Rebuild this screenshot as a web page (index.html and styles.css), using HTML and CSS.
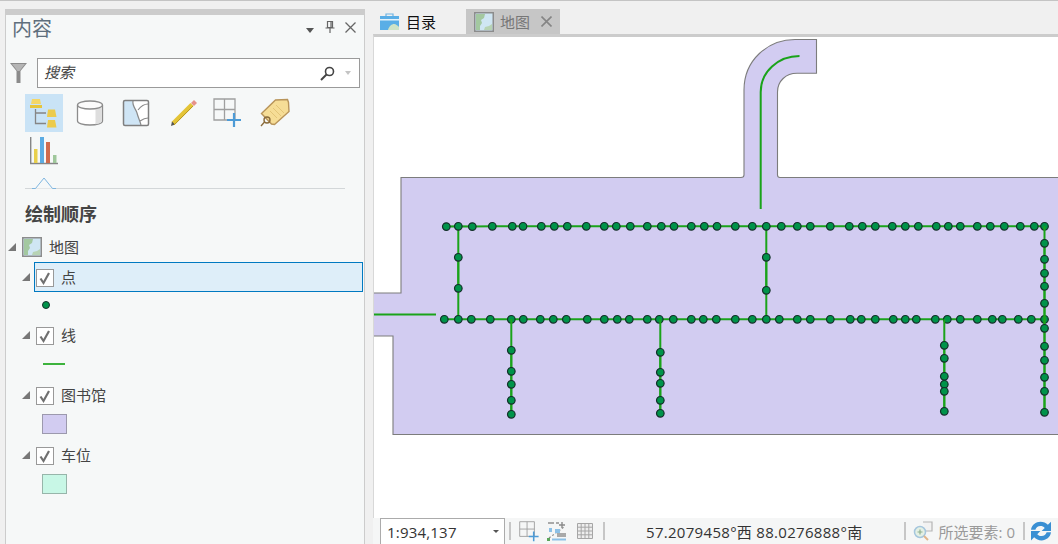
FILE: index.html
```html
<!DOCTYPE html>
<html lang="zh">
<head>
  <meta charset="UTF-8" />
  <title>内容 - 地图</title>
  <link rel="stylesheet" href="styles.css">
</head>
<body>
  <svg class="defs" width="0" height="0">
    <defs>
      <symbol id="map-thumb" viewBox="0 0 20 20">
        <rect x="0.75" y="0.75" width="18.5" height="18.5" fill="#cfe6f3" stroke="#8c8c8c" stroke-width="1.5"/>
        <path d="M2 2h9l-1 4-3 2 1 3-2 3v4H2z" fill="#a3c8a0"/>
        <path d="M18 12v6h-8l1-3 4-1z" fill="#b7d3b4"/>
      </symbol>
      <symbol id="check" viewBox="0 0 16 16">
        <path d="M3.500 8.500l3 4.500 5.500-10" fill="none" stroke="#707070" stroke-width="2.200"/>
      </symbol>
      <symbol id="grid-add" viewBox="0 0 30 30">
        <path d="M1 1h21v21H1zM11.500 1v21M1 11.500h21" fill="none" stroke="#9f9f9f" stroke-width="1.300"/>
        <path d="M21 15v14M14 22h14" fill="none" stroke="#4d9bd6" stroke-width="2.200"/>
      </symbol>
    </defs>
  </svg>

  <aside class="panel">
    <header class="panel-head">
      <h1 class="panel-title">内容</h1>
      <span class="panel-arrow"></span>
      <svg class="panel-pin" width="10" height="12" viewBox="0 0 10 12">
        <path d="M2.500 .5h5v6h-5zM.5 7h9M5 7v5M6 1v5" fill="none" stroke="#666" stroke-width="1.200"/>
      </svg>
      <svg class="panel-close" width="11" height="11" viewBox="0 0 11 11">
        <path d="M.5 .5l10 10M10.500 .5l-10 10" stroke="#666" stroke-width="1.300"/>
      </svg>
    </header>

    <div class="search-row">
      <svg width="17" height="20" viewBox="0 0 17 20">
        <path d="M0 0h17L10.500 8v12h-4V8z" fill="#8b8b8b"/>
        <path d="M2 1h13L9.500 8h-2z" fill="#b5b5b5"/>
      </svg>
      <div class="search-box">
        <span class="search-text">搜索</span>
        <svg class="search-icon" width="15" height="15" viewBox="0 0 15 15">
          <circle cx="9.500" cy="5.500" r="4" fill="none" stroke="#444" stroke-width="1.600"/>
          <path d="M6.500 8.500L1 14" stroke="#444" stroke-width="2"/>
        </svg>
        <span class="search-arrow"></span>
      </div>
    </div>

    <div class="toolbar">
      <button class="tool tool-active">
        <svg width="38" height="38" viewBox="0 0 38 38">
          <path d="M10.500 15v14.500H21M10.500 19H21" fill="none" stroke="#858585" stroke-width="1.300"/>
          <path d="M7 5h8l1 5H6z" fill="#f4d768"/><path d="M5 11h12v3H5z" fill="#e6c53c"/>
          <path d="M23 15.500h7l1.500 7.500H22z" fill="#eccb4c"/>
          <path d="M23 26h7l1.500 7.500H22z" fill="#eccb4c"/>
        </svg>
      </button>
      <button class="tool">
        <svg width="38" height="38" viewBox="0 0 38 38">
          <path d="M6.500 11v16c0 2.200 5.500 4 12.500 4s12.500-1.800 12.500-4V11" fill="#fff" stroke="#8c8c8c" stroke-width="1.300"/>
          <path d="M24.500 14v16.300c4-.5 6.400-1.800 6.400-3.300V14z" fill="#dedede"/>
          <ellipse cx="19" cy="11" rx="12.500" ry="4" fill="#fbfbfb" stroke="#8c8c8c" stroke-width="1.300"/>
        </svg>
      </button>
      <button class="tool">
        <svg width="38" height="38" viewBox="0 0 38 38">
          <path d="M7 7h24v24H7z" fill="#fff"/>
          <path d="M7 7h9c-1 5 3 8 4 12 1 4 3 8 4 12H7z" fill="#cfe5f5"/>
          <path d="M16 7c-1 5 3 8 4 12 1 4 3 8 4 12M21 16c3-4 6-6 10-6M23 27c3-2 5-3 8-3" fill="none" stroke="#8a8a8a" stroke-width="1.200"/>
          <rect x="6.500" y="6.500" width="25" height="25" rx="1.500" fill="none" stroke="#7f7f7f" stroke-width="1.500"/>
        </svg>
      </button>
      <button class="tool">
        <svg width="38" height="38" viewBox="0 0 38 38">
          <path d="M10 29.500L29 10.500" stroke="#e4c437" stroke-width="4.500"/>
          <path d="M28 9l3-3 3 3-3 3z" fill="#e6928a"/>
          <path d="M8 32l1-4.500 3 3z" fill="#555"/>
          <path d="M11 31L30 12" stroke="#b99a22" stroke-width="1"/>
        </svg>
      </button>
      <button class="tool">
        <svg class="tool-wide" width="30" height="30" viewBox="0 0 30 30"><use href="#grid-add"/></svg>
      </button>
      <button class="tool">
        <svg width="38" height="38" viewBox="0 0 38 38">
          <path d="M7 20L21 6.500 33 6l1 3 .5 9L20 31l-3-.5z" transform="translate(-.5 -.5)" fill="#f6dd96" stroke="#b8945a" stroke-width="1.400"/>
          <path d="M18 14l8 8M21 11l8 8M15 17l7 7" stroke="#e3c578" stroke-width="1"/>
          <circle cx="12" cy="26" r="3" fill="none" stroke="#8a6b3a" stroke-width="1.400"/>
          <path d="M9.500 28L6 32" stroke="#8a6b3a" stroke-width="1.400"/>
        </svg>
      </button>
      <button class="tool">
        <svg width="38" height="38" viewBox="0 0 38 38">
          <path d="M5.700 5v26.500H33" fill="none" stroke="#868686" stroke-width="1.400"/>
          <rect x="9" y="17" width="3.500" height="14" fill="#e8cf4c"/>
          <rect x="15" y="5" width="4" height="26" fill="#5cace3"/>
          <rect x="21" y="10" width="4" height="21" fill="#cf6b4d"/>
          <rect x="28" y="23" width="3.500" height="8" fill="#9fc79b"/>
        </svg>
      </button>
    </div>

    <div class="tab-line">
      <svg class="tab-notch" width="24" height="12" viewBox="0 0 24 12">
        <path d="M0 11.500h3.500L12 1l8.500 10.500H24" fill="#f6f8f8" stroke="#7eb6e0" stroke-width="1"/>
      </svg>
    </div>

    <h2 class="section-title">绘制顺序</h2>

    <div class="map-row">
      <span class="twisty"></span>
      <svg width="20" height="20"><use href="#map-thumb"/></svg>
      <span class="label">地图</span>
    </div>

    <div class="layer layer-first">
      <div class="layer-row">
        <span class="twisty"></span>
        <div class="layer-item layer-selected">
          <span class="checkbox"><svg width="16" height="16"><use href="#check"/></svg></span>
          <span class="label">点</span>
        </div>
      </div>
      <div class="legend"><span class="legend-dot"></span></div>
    </div>

    <div class="layer">
      <div class="layer-row">
        <span class="twisty"></span>
        <div class="layer-item">
          <span class="checkbox"><svg width="16" height="16"><use href="#check"/></svg></span>
          <span class="label">线</span>
        </div>
      </div>
      <div class="legend"><span class="legend-line"></span></div>
    </div>

    <div class="layer">
      <div class="layer-row">
        <span class="twisty"></span>
        <div class="layer-item">
          <span class="checkbox"><svg width="16" height="16"><use href="#check"/></svg></span>
          <span class="label">图书馆</span>
        </div>
      </div>
      <div class="legend"><span class="legend-swatch swatch-library"></span></div>
    </div>

    <div class="layer">
      <div class="layer-row">
        <span class="twisty"></span>
        <div class="layer-item">
          <span class="checkbox"><svg width="16" height="16"><use href="#check"/></svg></span>
          <span class="label">车位</span>
        </div>
      </div>
      <div class="legend"><span class="legend-swatch swatch-parking"></span></div>
    </div>
  </aside>

  <main class="main">
    <nav class="tabs">
      <div class="tab tab-catalog">
        <svg width="19" height="17" viewBox="0 0 19 17">
          <path d="M6 3V1h7v2" fill="none" stroke="#6db3e3" stroke-width="1.200"/>
          <rect y="3" width="19" height="14" fill="#5aaee6"/>
          <rect y="6" width="19" height="1.500" fill="#e6f3fb"/>
          <path d="M8 17c1-4 4-6 6-6s4 2 5 3v3z" fill="#cfe3c6"/>
        </svg>
        <span>目录</span>
      </div>
      <div class="tab tab-map">
        <svg width="20" height="20"><use href="#map-thumb"/></svg>
        <span>地图</span>
        <svg class="tab-close" width="11" height="11" viewBox="0 0 11 11">
          <path d="M.5 .5l10 10M10.500 .5l-10 10" stroke="#858585" stroke-width="1.600"/>
        </svg>
      </div>
    </nav>

    <section class="map">
      <svg class="map-canvas" width="684" height="481" viewBox="374 37 684 481">
        <defs>
          <marker id="pt" markerUnits="userSpaceOnUse" markerWidth="11" markerHeight="11" refX="5.500" refY="5.500">
            <circle cx="5.500" cy="5.500" r="3.800" fill="#00934a" stroke="#14302a" stroke-width="1.200"/>
          </marker>
        </defs>

        <path class="parking" d="M370 293H401V177.500H741Q744 177.500 744 175V90C744 60 768 39.500 795 39.500H816.500V73.300H797C786 73.300 777.500 81 777.500 92V175Q777.500 177.500 780 177.500H1070V434.500H393V336H370"/>
        <path class="road" d="M374 314.500H436"/>
        <path class="road" d="M760.700 209V92C760.700 72 778 56 799.500 56"/>
        <path class="road" d="M458.300 226.300V319.300M766.300 226.300V319.300"/>

        <polyline class="net" points="446.300,226.600 458.300,226.300 472.300,226.600 492.300,226.300 512.300,226.300 523,226.300 541.300,226.300 554.300,226.300 567.300,226.300 586.300,226.300 604.300,226.300 616.300,226.300 630.300,226.300 647.300,226.300 661.300,226.300 674,226.300 691.300,226.300 704.300,226.300 717,226.300 735.300,226.300 752.300,226.300 766.300,226.300 781.300,226.300 797.300,226.300 810.300,226.300 830.300,226.300 849.300,226.300 862.300,226.300 875.300,226.300 892.300,226.300 905.300,226.300 918.300,226.300 936.300,226.300 948.300,226.300 960.300,226.300 977.300,226.300 990.300,226.300 1004.300,226.300 1020.300,226.300 1034.300,226.300 1044.500,226.300"/>
        <polyline class="net" points="444.300,319.300 458.300,319.300 471.300,319.300 490.300,319.300 511.300,319.300 523.300,319.300 540.300,319.300 553.300,319.300 566.300,319.300 587.300,319.300 604.300,319.300 617.300,319.300 629.300,319.300 647.300,319.300 659.300,319.300 673.300,319.300 691.300,319.300 703.300,319.300 716.300,319.300 735.300,319.300 752.300,319.300 766.300,319.300 779.300,319.300 797.300,319.300 810.300,319.300 830.300,319.300 850.300,319.300 861.300,319.300 875.300,319.300 893.300,319.300 905.300,319.300 916.300,319.300 935.300,319.300 947.300,319.300 960.300,319.300 977.300,319.300 992.300,319.300 1002.300,319.300 1018.300,319.300 1031.300,319.300 1044.500,319.300"/>
        <polyline class="net" points="458.300,257.300 458.300,288.300"/>
        <polyline class="net" points="766.300,257.300 766.300,290.300"/>
        <path class="road" d="M1044.500 226.300V412M511.300 319.300V414M660.300 319.300V413M944.300 319.300V411"/>
        <polyline class="net" points="1044.500,243.300 1044.500,259.300 1044.500,273.300 1044.500,286.300 1044.500,303.300 1044.500,328.300 1044.500,346.300 1044.500,360.300 1044.500,377.300 1044.500,391.300 1044.500,412.300"/>
        <polyline class="net" points="511.300,350.300 511.300,371.300 511.300,384.300 511.300,400.300 511.300,414.300"/>
        <polyline class="net" points="660.300,352.300 660.300,372.300 660.300,383.300 660.300,400.300 660.300,413.300"/>
        <polyline class="net" points="944.300,345.300 944.300,358.300 944.300,376.300 944.300,384.300 944.300,391.300 944.300,411.300"/>
      </svg>
    </section>

    <footer class="status">
      <div class="scale">
        <span>1:934,137</span>
        <span class="scale-arrow"></span>
      </div>
      <span class="status-sep"></span>
      <svg class="status-grid" width="21" height="21" viewBox="0 0 30 30"><use href="#grid-add"/></svg>
      <svg class="status-snap" width="20" height="20" viewBox="0 0 20 20">
        <path d="M2 17L17 6" stroke="#8a8a8a" stroke-width="1.200" stroke-dasharray="2 2"/>
        <path d="M1 1h6v2H1zM9 1h3v2H9zM10 12h9v4h-9z" fill="#a9a9a9"/>
        <path d="M8 8h5v4H8zM2 7h3v4H2z" fill="#8cc0e6"/>
        <path d="M15 1v6M12 4h6" stroke="#8a8a8a" stroke-width="1.400"/>
        <path d="M0 17h3v3H0z" fill="#5aa65a"/>
        <path d="M5 18.500h14" stroke="#8cc0e6" stroke-width="2"/>
      </svg>
      <svg class="status-table" width="16" height="16" viewBox="0 0 16 16">
        <path d="M.5 .5h15v15H.5zM.5 4.200h15M.5 8h15M.5 11.800h15M4.200 .5v15M8 .5v15M11.800 .5v15" fill="#eee" stroke="#a6a6a6" stroke-width="1"/>
      </svg>
      <span class="status-sep status-sep-table"></span>
      <span class="coords">57.2079458°西 88.0276888°南</span>
      <div class="status-right">
        <span class="status-sep"></span>
        <svg class="status-select" width="20" height="20" viewBox="0 0 20 20">
          <path d="M10 1h9v9h-6" fill="#f2f2f2" stroke="#b5b5b5" stroke-width="1.200"/>
          <circle cx="7" cy="11" r="5.500" fill="#e4f0e4" stroke="#a5c6dd" stroke-width="1.500"/>
          <path d="M4.500 11h5M7 8.500v5" stroke="#8fb08f" stroke-width="1.200"/>
          <path d="M11 15l4 4" stroke="#e0b58a" stroke-width="2"/>
        </svg>
        <span class="selected-count">所选要素: 0</span>
        <span class="status-sep"></span>
        <svg class="status-refresh" width="20" height="20" viewBox="2 2 16 16">
          <path d="M2 9C2.500 5 6 2.500 9.500 2.500c2.500 0 4.500 1 6 2.500L18 2.500V10h-7.500l2.500-2.500C12 6.500 11 6 9.500 6 7.500 6 6 7.300 5.500 9z" fill="#3a8fd3"/>
          <path d="M18 11c-.5 4-4 6.500-7.500 6.500-2.500 0-4.500-1-6-2.500L2 17.500V10h7.500L7 12.500c1 1 2 1.500 3.500 1.500 2 0 3.500-1.300 4-3z" fill="#3a8fd3"/>
        </svg>
      </div>
    </footer>
  </main>
</body>
</html>
```

FILE: styles.css
```css
:root {
  --page-bg: #f0f0f0;
  --panel-bg: #f6f8f8;
  --line: #cccccc;
  --text-dark: #444;
  --text-muted: #5f6f7d;
  --library: #d2ccf1;
  --road: #1aa31a;
}
* {
  box-sizing: border-box;
}
html, body {
  height: 100%;
}
body {
  margin: 0;
  height: 544px;
  overflow: hidden;
  display: flex;
  background: var(--page-bg);
  border-top: 1px solid #c4c4c4;
  color: var(--text-dark);
  font-family: "Open Sans", "Noto Sans CJK SC", sans-serif;
  font-size: 15px;
}
.defs {
  position: absolute;
}
svg {
  display: block;
  flex: none;
}

/* contents pane */
.panel {
  width: 360px;
  margin: 8px 0 0 5px;
  background: var(--panel-bg);
  border: 1px solid var(--line);
  border-top: 6px solid var(--line);
  border-bottom: none;
}
.panel-head {
  height: 28px;
  display: flex;
  align-items: center;
  padding-left: 6px;
}
.panel-title {
  margin: 0;
  flex: 1;
  font-size: 20px;
  font-weight: 400;
  line-height: 28px;
  color: var(--text-muted);
}
.panel-arrow {
  width: 0;
  height: 0;
  margin-right: 11px;
  margin-top: 2px;
  border: 4.5px solid transparent;
  border-top: 5px solid #555;
  border-bottom: none;
}
.panel-pin {
  margin: -4px 10px 0 0;
}
.panel-close {
  margin: -4px 8px 0 0;
}
.search-row {
  display: flex;
  align-items: center;
  gap: 10px;
  height: 30px;
  margin-top: 15px;
  padding-left: 4px;
}
.search-box {
  width: 323px;
  height: 30px;
  display: flex;
  align-items: center;
  padding: 0 8px 0 6px;
  background: #fff;
  border: 1px solid #9a9a9a;
}
.search-text {
  flex: 1;
  padding-bottom: 3px;
  font-size: 15px;
  font-style: italic;
  color: #444;
}
.search-arrow {
  width: 0;
  height: 0;
  margin-left: 10px;
  border: 3.5px solid transparent;
  border-top: 4px solid #c4c4c4;
  border-bottom: none;
}
.toolbar {
  display: flex;
  flex-wrap: wrap;
  column-gap: 8px;
  width: 300px;
  margin: 6px 0 0 19px;
}
.tool {
  width: 38px;
  height: 38px;
  padding: 0;
  display: flex;
  align-items: center;
  justify-content: center;
  background: none;
  border: none;
}
.tool-active {
  background: #c9e3f6;
}
.tab-line {
  position: relative;
  height: 19px;
  margin: 0 19px;
  border-bottom: 1px solid #d3d7d9;
}
.tab-notch {
  position: absolute;
  left: 7px;
  bottom: -1px;
}
.section-title {
  margin: 13px 0 0 19px;
  height: 24px;
  font-size: 18px;
  font-weight: 700;
  line-height: 24px;
}
.map-row {
  display: flex;
  align-items: center;
  gap: 6px;
  height: 22px;
  margin: 10px 0 4px;
  padding-left: 2px;
}
.twisty {
  width: 0;
  height: 0;
  flex: none;
  border: 4.5px solid;
  border-color: transparent #777 #777 transparent;
}
.label {
  margin-left: 1px;
  line-height: 20px;
}
.layer {
  height: 60px;
}
.layer-first {
  height: 58px;
}
.layer-row {
  display: flex;
  align-items: center;
  height: 30px;
  padding-left: 16px;
}
.layer-item {
  flex: 1;
  height: 30px;
  display: flex;
  align-items: center;
  gap: 6px;
  margin: 0 1px 0 4px;
  padding-left: 1px;
  border: 1px solid transparent;
}
.layer-selected {
  background: #deeef9;
  border-color: #0079c1;
}
.checkbox {
  width: 18px;
  height: 18px;
  margin-top: 1px;
  background: #fff;
  border: 1px solid #999;
}
.legend {
  height: 28px;
  display: flex;
  align-items: center;
  padding-left: 36px;
}
.layer-first .legend {
  height: 26px;
}
.legend-dot {
  width: 8px;
  height: 8px;
  border-radius: 50%;
  background: #00934a;
  border: 1px solid #14302a;
}
.legend-line {
  width: 22px;
  height: 2px;
  margin-left: 1px;
  background: #3db33d;
}
.legend-swatch {
  width: 25px;
  height: 20px;
  border: 1px solid #9c99ad;
}
.swatch-library {
  background: var(--library);
}
.swatch-parking {
  background: #c8f7e6;
  border-color: #97b5aa;
}

/* map side */
.main {
  flex: 1;
  min-width: 0;
  margin-left: 8px;
  display: flex;
  flex-direction: column;
}
.tabs {
  height: 33px;
  display: flex;
  align-items: flex-end;
}
.tab {
  display: flex;
  align-items: center;
  height: 25px;
}
.tab-catalog {
  width: 93px;
  gap: 7px;
  padding-left: 7px;
  color: #111;
}
.tab-map {
  width: 94px;
  gap: 6px;
  padding-left: 8px;
  background: #c6c6c6;
  color: #777;
}
.tab-close {
  margin-left: 5px;
}
.map {
  flex: 1;
  background: #fff;
  border-top: 3px solid var(--line);
  border-left: 1px solid #d8d8d8;
}
.parking {
  fill: var(--library);
  stroke: #7c7c7c;
  stroke-width: 1.100;
}
.road {
  fill: none;
  stroke: var(--road);
  stroke-width: 2;
}
.net {
  fill: none;
  stroke: var(--road);
  stroke-width: 2;
  marker-start: url(#pt);
  marker-mid: url(#pt);
  marker-end: url(#pt);
}
.status {
  height: 26px;
  flex: none;
  display: flex;
  align-items: center;
  padding-left: 7px;
  background: #f5f6f6;
}
.scale {
  width: 125px;
  height: 26px;
  align-self: flex-end;
  display: flex;
  align-items: center;
  justify-content: space-between;
  padding: 0 5px 0 6px;
  background: #fff;
  border: 1px solid #ababab;
  border-bottom: none;
  color: #333;
  letter-spacing: .2px;
}
.scale-arrow {
  width: 0;
  height: 0;
  border: 3px solid transparent;
  border-top: 3.5px solid #555;
  border-bottom: none;
}
.status-sep {
  width: 2px;
  height: 18px;
  background: #c6c6c6;
}
.scale + .status-sep {
  margin-left: 4px;
}
.status-grid {
  margin-left: 8px;
}
.status-snap {
  margin-left: 7px;
}
.status-table {
  margin-left: 10px;
}
.status-sep-table {
  margin-left: 10px;
}
.coords {
  margin-left: 41px;
  color: #333;
  letter-spacing: .3px;
  white-space: nowrap;
}
.status-right {
  margin-left: auto;
  display: flex;
  align-items: center;
  padding-right: 7px;
}
.status-select {
  margin-left: 7px;
}
.selected-count {
  margin: 0 8px 0 6px;
  color: #9a9a9a;
  white-space: nowrap;
}
.status-refresh {
  margin-left: 6px;
}
```
